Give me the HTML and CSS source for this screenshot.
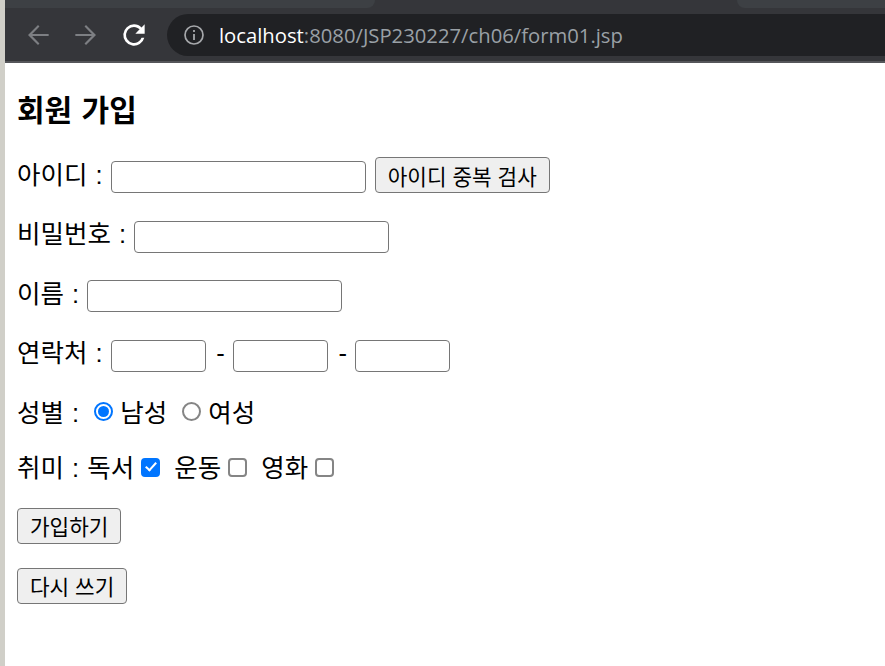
FILE: index.html
```html
<!doctype html>
<html lang="ko">

<head>
    <meta charset="utf-8">
    <title>form01</title>
    <link rel="stylesheet" href="styles.css">
</head>

<body>
    <div class="tabstrip">
        <div class="tab tab-left"></div>
        <div class="tab tab-right"></div>
    </div>
    <div class="toolbar">
        <svg class="nav-icon" viewBox="0 0 24 24"><path d="M20 11.2H7.6l5.5-5.6L12 4.5 4.5 12l7.5 7.5 1.1-1.1-5.5-5.6H20z" fill="#7d7f83"/></svg>
        <svg class="nav-icon" viewBox="0 0 24 24"><path d="M4 11.2h12.4l-5.5-5.6L12 4.5l7.5 7.5-7.5 7.5-1.1-1.1 5.5-5.6H4z" fill="#7d7f83"/></svg>
        <svg class="nav-icon" viewBox="0 0 24 24"><path d="M17.65 6.35A7.95 7.95 0 0 0 12 4a8 8 0 1 0 7.73 10h-2.08A6 6 0 1 1 12 6c1.66 0 3.14.69 4.22 1.78L13 11h7V4z" fill="#fff"/></svg>
        <div class="omnibox">
            <svg class="info-icon" viewBox="0 0 24 24"><circle cx="12" cy="12" r="9" fill="none" stroke="#a6a8ab" stroke-width="1.7"/><path d="M11.1 11h1.8v6h-1.8zM11.1 7h1.8v2h-1.8z" fill="#a6a8ab"/></svg>
            <span class="url"><b>localhost</b>:8080/JSP230227/ch06/form01.jsp</span>
        </div>
    </div>
    <div class="page">
        <h3 class="title">회원 가입</h3>
        <form>
            <p>아이디 : <input type="text" class="txt"> <input type="button" value="아이디 중복 검사"></p>
            <p>비밀번호 : <input type="password" class="txt"></p>
            <p>이름 : <input type="text" class="txt"></p>
            <p>연락처 : <input type="text" class="tel"> - <input type="text" class="tel"> - <input type="text" class="tel"></p>
            <p>성별 : <input type="radio" name="gender" checked>남성 <input type="radio" name="gender" class="next-radio">여성</p>
            <p>취미 : 독서<input type="checkbox" checked> 운동<input type="checkbox"> 영화<input type="checkbox"></p>
            <p><input type="submit" value="가입하기"></p>
            <p><input type="reset" value="다시 쓰기"></p>
        </form>
    </div>
</body>

</html>
```
FILE: styles.css
```css
html,
body {
    margin: 0;
    height: 100%;
    overflow: hidden;
    background: #fff;
}

body {
    border-left: 5px solid #d0cfc8;
    box-sizing: border-box;
    font-family: "Liberation Sans", "Noto Sans CJK KR", sans-serif;
}

.tabstrip {
    height: 8px;
    background: #35363a;
    display: flex;
    justify-content: space-between;
}

.tab {
    height: 8px;
    background: #3d4044;
}

.tab-left {
    width: 370px;
    border-bottom-right-radius: 8px;
}

.tab-right {
    width: 148px;
    border-bottom-left-radius: 8px;
}

.toolbar {
    height: 55px;
    box-sizing: border-box;
    padding: 6px 0 5px 17px;
    display: flex;
    align-items: center;
    gap: 16px;
    background: #35363a;
    border-bottom: 2px solid #55565a;
}

.nav-icon {
    width: 32px;
    height: 32px;
    flex: none;
}

.omnibox {
    flex: 1;
    height: 42px;
    margin-left: 1px;
    border-radius: 21px 0 0 21px;
    background: #202124;
    display: flex;
    align-items: center;
    padding-left: 15px;
    gap: 13px;
}

.info-icon {
    width: 24px;
    height: 24px;
}

.url {
    font-family: "Open Sans", sans-serif;
    font-size: 20.25px;
    color: #9aa0a6;
}

.url b {
    font-weight: normal;
    color: #fff;
}

.page {
    padding: 0 12px;
    font-size: 25.5px;
    line-height: 31px;
    word-spacing: 1px;
    color: #000;
}

.title {
    font-size: 30px;
    margin: 30px 0 0;
    line-height: 36px;
}

form {
    padding-top: 4px;
}

p {
    margin: 24px 0 0;
}

input[type=text],
input[type=password] {
    box-sizing: border-box;
    height: 32px;
    margin-bottom: 2px;
    border: 1px solid #767676;
    border-radius: 4px;
    padding: 0 3px;
    background: #fff;
    vertical-align: 2px;
}

.txt {
    width: 255px;
}

.tel {
    width: 95px;
    margin-right: 2.5px;
}

input[type=button],
input[type=submit],
input[type=reset] {
    box-sizing: border-box;
    height: 36px;
    padding: 0 12px;
    border: 1px solid #767676;
    border-radius: 4px;
    background: #efefef;
    font-family: "Liberation Sans", "Noto Sans CJK KR", sans-serif;
    font-size: 21.3px;
    color: #000;
}

input[type=button] {
    margin-left: 1px;
    vertical-align: -1px;
}

input[type=radio],
input[type=checkbox] {
    appearance: none;
    box-sizing: border-box;
    position: relative;
    width: 19px;
    height: 19px;
    background: #fff;
    border: 2px solid #858585;
}

input[type=radio] {
    margin: 0 7px;
    border-radius: 50%;
    vertical-align: 1px;
}

input[type=radio]:checked {
    border-color: #0075ff;
}

input[type=radio]:checked::after {
    content: "";
    position: absolute;
    inset: 2px;
    border-radius: 50%;
    background: #0075ff;
}

.next-radio {
    margin-left: 11px;
}

input[type=checkbox] {
    margin: 0 6px 0 7px;
    border-radius: 4px;
    vertical-align: 0;
}

input[type=checkbox]:checked {
    border-color: #0075ff;
    background: #0075ff;
}

input[type=checkbox]:checked::after {
    content: "";
    position: absolute;
    left: 4.5px;
    top: 0.5px;
    width: 4px;
    height: 9px;
    border: solid #fff;
    border-width: 0 2.5px 2.5px 0;
    transform: rotate(42deg);
}
```
